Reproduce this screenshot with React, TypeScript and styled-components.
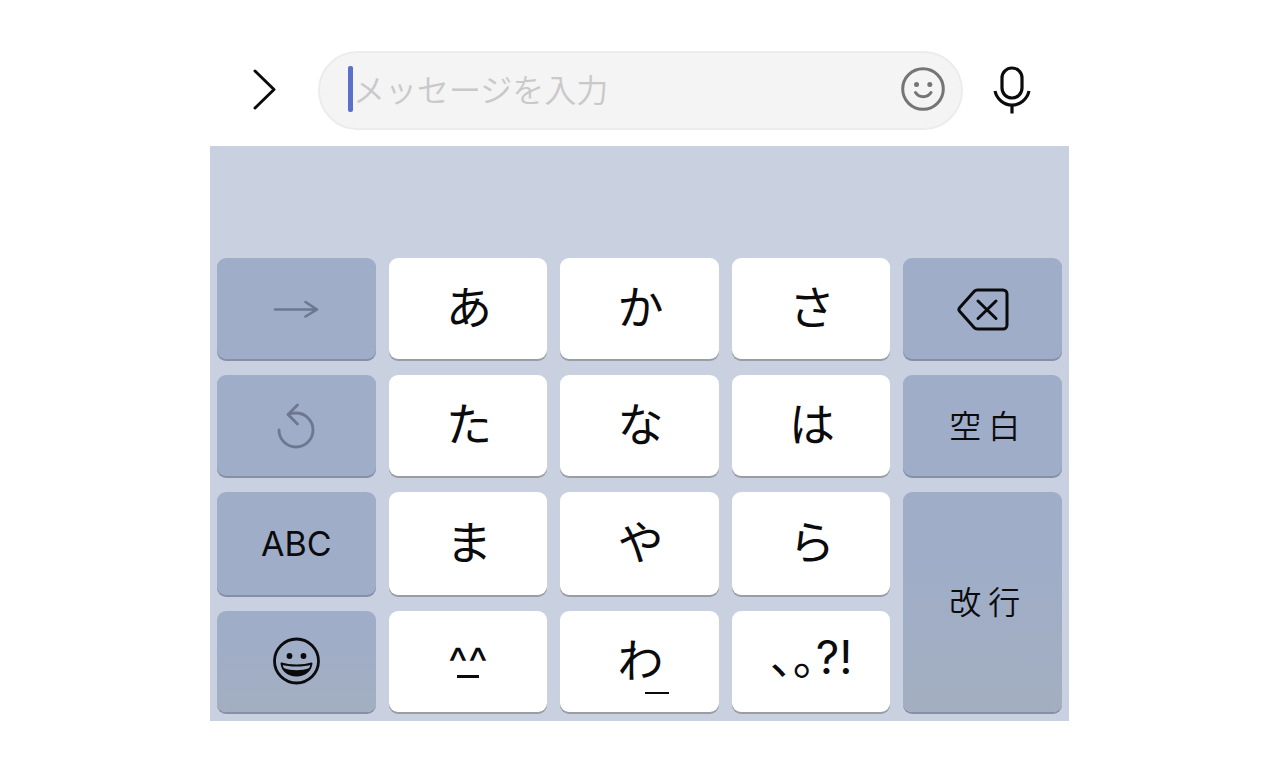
import React from 'react';
import styled, { createGlobalStyle } from 'styled-components';

const GlobalStyle = createGlobalStyle`
  * { box-sizing: border-box; }
  body {
    margin: 0;
    background: #ffffff;
    font-family: Inter, "Noto Sans CJK JP", sans-serif;
    color: #0b0b0d;
  }
  button, input { font: inherit; color: inherit; margin: 0; padding: 0; border: 0; }
  button { cursor: pointer; }
  svg { display: block; fill: none; stroke: currentColor; stroke-linecap: round; stroke-linejoin: round; }
`;

const Screen = styled.main`
  width: 100%;
  max-width: 859px;
  margin: 0 auto;
  padding: 51px 0 46px;
`;

const MessageBar = styled.form`
  display: flex;
  align-items: center;
  padding: 0 8px 16px 0;
`;

const BarButton = styled.button<{ $width: number }>`
  flex: 0 0 ${(p) => p.$width}px;
  display: flex;
  justify-content: center;
  padding-bottom: 2px;
  background: none;
`;

const Field = styled.label`
  flex: 1;
  min-width: 0;
  height: 79px;
  display: flex;
  align-items: center;
  padding: 0 16px 4px 28px;
  border: 2px solid #ececec;
  border-radius: 40px;
  background: #f4f4f4;
`;

const Caret = styled.span`
  flex: none;
  width: 5px;
  height: 46px;
  border-radius: 2px;
  background: #5b70c8;
`;

const MessageInput = styled.input`
  flex: 1;
  min-width: 0;
  height: 48px;
  padding-bottom: 2px;
  background: none;
  outline: none;
  font-family: "Noto Sans CJK JP", sans-serif;
  font-size: 32px;
  font-weight: 350;
  &::placeholder { color: #c9c9c9; opacity: 1; }
`;

const EmojiButton = styled.button`
  flex: none;
  background: none;
  color: #757575;
`;

const Keyboard = styled.section`
  display: grid;
  grid-template-columns: repeat(5, 1fr);
  grid-template-rows: 101px 101px 103px 101px;
  gap: 16px 13px;
  padding: 112px 7px 9px;
  background: #c9d1e0;
`;

type Tone = 'light' | 'dark' | 'fade';
const toneFill: Record<Tone, string> = {
  light: '#ffffff',
  dark: '#9fadc8',
  fade: 'linear-gradient(#9fadc8 30%, #a3afc0)',
};

const Key = styled.button<{ $tone: Tone; $tall?: boolean; $muted?: boolean }>`
  position: relative;
  display: flex;
  flex-direction: column;
  align-items: center;
  justify-content: center;
  grid-row: ${(p) => (p.$tall ? 'span 2' : 'auto')};
  border-radius: 9px;
  background: ${(p) => toneFill[p.$tone]};
  box-shadow: 0 2px 0 ${(p) => (p.$tone === 'light' ? '#9a9da6' : '#8590a6')};
  color: ${(p) => (p.$muted ? '#6c7890' : '#0b0b0d')};
`;

const Kana = styled.span`
  font-family: "Noto Sans CJK JP", sans-serif;
  font-size: 46px;
  line-height: 48px;
  padding: 0 0 10px 2px;
`;

const Word = styled.span`
  font-family: "Noto Sans CJK JP", sans-serif;
  font-size: 32px;
  line-height: 40px;
  font-weight: 350;
  padding: 0 0 4px 4px;
`;

const Latin = styled.span`
  font-size: 34px;
  line-height: 40px;
`;

const Marks = styled.span`
  font-size: 46px;
  line-height: 48px;
  font-weight: 400;
  font-feature-settings: "halt";
  padding-bottom: 10px;
`;

const Carets = styled.span`
  font-size: 42px;
  line-height: 42px;
  height: 34px;
`;

const Mouth = styled.span`
  width: 22px;
  height: 3px;
  margin-bottom: 4px;
  background: currentColor;
`;

const LowLine = styled.span`
  position: absolute;
  left: 50%;
  bottom: 18px;
  margin-left: 6px;
  width: 24px;
  height: 2px;
  background: currentColor;
`;

const ChevronIcon = () => (
  <svg width="24" height="42" viewBox="0 0 24 42" strokeWidth="3" strokeLinejoin="miter">
    <path d="M3 2 22 20.500 3 39" />
  </svg>
);

const SmileIcon = () => (
  <svg width="44" height="44" viewBox="0 0 44 44" strokeWidth="3">
    <circle cx="22" cy="22" r="20.3" />
    <circle cx="15.5" cy="17.5" r="2.5" fill="currentColor" stroke="none" />
    <circle cx="28.8" cy="17.5" r="2.5" fill="currentColor" stroke="none" />
    <path d="M14.5 25.5c3.6 5.6 12 5.6 15.5 0" />
  </svg>
);

const MicIcon = () => (
  <svg width="38" height="50" viewBox="0 0 38 50" strokeWidth="3.2">
    <rect x="9" y="3" width="20" height="30" rx="10" />
    <path d="M2 26c2 8.5 9 14 17 14s15-5.5 17-14M19 40v8.5" strokeLinecap="butt" />
  </svg>
);

const ArrowIcon = () => (
  <svg width="46" height="18" viewBox="0 0 46 18" strokeWidth="2.6">
    <path d="M2 9.500h41M32.5 2 44 9.500l-11.5 7" />
  </svg>
);

const UndoIcon = () => (
  <svg width="38" height="46" viewBox="0 0 38 46" strokeWidth="2.8">
    <path d="M2 27A17 17 0 1 0 19 10q-4.5 0-7.5 1.5M20.500 2 11 11.500l9.500 9.500" />
  </svg>
);

const DeleteIcon = () => (
  <svg width="52" height="46" viewBox="0 0 52 46" strokeWidth="3">
    <path d="M20.5 4H46a4 4 0 0 1 4 4v31a4 4 0 0 1-4 4H20.5a5 5 0 0 1-3.4-1.4L2.800 25.500a3 3 0 0 1 0-4L17.1 5.400A5 5 0 0 1 20.5 4Z" />
    <path d="m21 15 18 17.500M39 15 21 32.500" />
  </svg>
);

const GrinIcon = () => (
  <svg width="48" height="50" viewBox="0 0 48 50" strokeWidth="2.8">
    <circle cx="24.500" cy="24" r="22" />
    <circle cx="17.500" cy="19" r="2.900" fill="currentColor" stroke="none" />
    <circle cx="31.500" cy="19" r="2.900" fill="currentColor" stroke="none" />
    <path d="M9.500 26.500c8 2.600 22 2.600 30 0-.8 7.500-7 12-15 12s-14.200-4.500-15-12Z" strokeWidth="2" />
    <path d="M11.500 31c8 3 18 3 26 0-2.200 5.500-7 8-13 8s-10.800-2.500-13-8Z" fill="currentColor" stroke="none" />
  </svg>
);

const KanaKey = ({ label }: { label: string }) => (
  <Key type="button" $tone="light">
    <Kana>{label}</Kana>
  </Key>
);

export default function App() {
  return (
    <>
      <GlobalStyle />
      <Screen>
        <MessageBar onSubmit={(e) => e.preventDefault()}>
          <BarButton type="button" $width={108} aria-label="開く"><ChevronIcon /></BarButton>
          <Field>
            <Caret />
            <MessageInput type="text" aria-label="メッセージ" placeholder="メッセージを入力" />
            <EmojiButton type="button" aria-label="スタンプ"><SmileIcon /></EmojiButton>
          </Field>
          <BarButton type="button" $width={98} aria-label="音声入力"><MicIcon /></BarButton>
        </MessageBar>
        <Keyboard>
          <Key type="button" $tone="dark" $muted aria-label="次へ"><ArrowIcon /></Key>
          <KanaKey label="あ" />
          <KanaKey label="か" />
          <KanaKey label="さ" />
          <Key type="button" $tone="dark" aria-label="削除"><DeleteIcon /></Key>

          <Key type="button" $tone="dark" $muted aria-label="戻す"><UndoIcon /></Key>
          <KanaKey label="た" />
          <KanaKey label="な" />
          <KanaKey label="は" />
          <Key type="button" $tone="dark"><Word>空 白</Word></Key>

          <Key type="button" $tone="dark"><Latin>ABC</Latin></Key>
          <KanaKey label="ま" />
          <KanaKey label="や" />
          <KanaKey label="ら" />
          <Key type="button" $tone="fade" $tall><Word>改 行</Word></Key>

          <Key type="button" $tone="fade" aria-label="絵文字"><GrinIcon /></Key>
          <Key type="button" $tone="light" aria-label="顔文字">
            <Carets>^^</Carets>
            <Mouth />
          </Key>
          <Key type="button" $tone="light">
            <Kana>わ</Kana>
            <LowLine />
          </Key>
          <Key type="button" $tone="light"><Marks>、。?!</Marks></Key>
        </Keyboard>
      </Screen>
    </>
  );
}
